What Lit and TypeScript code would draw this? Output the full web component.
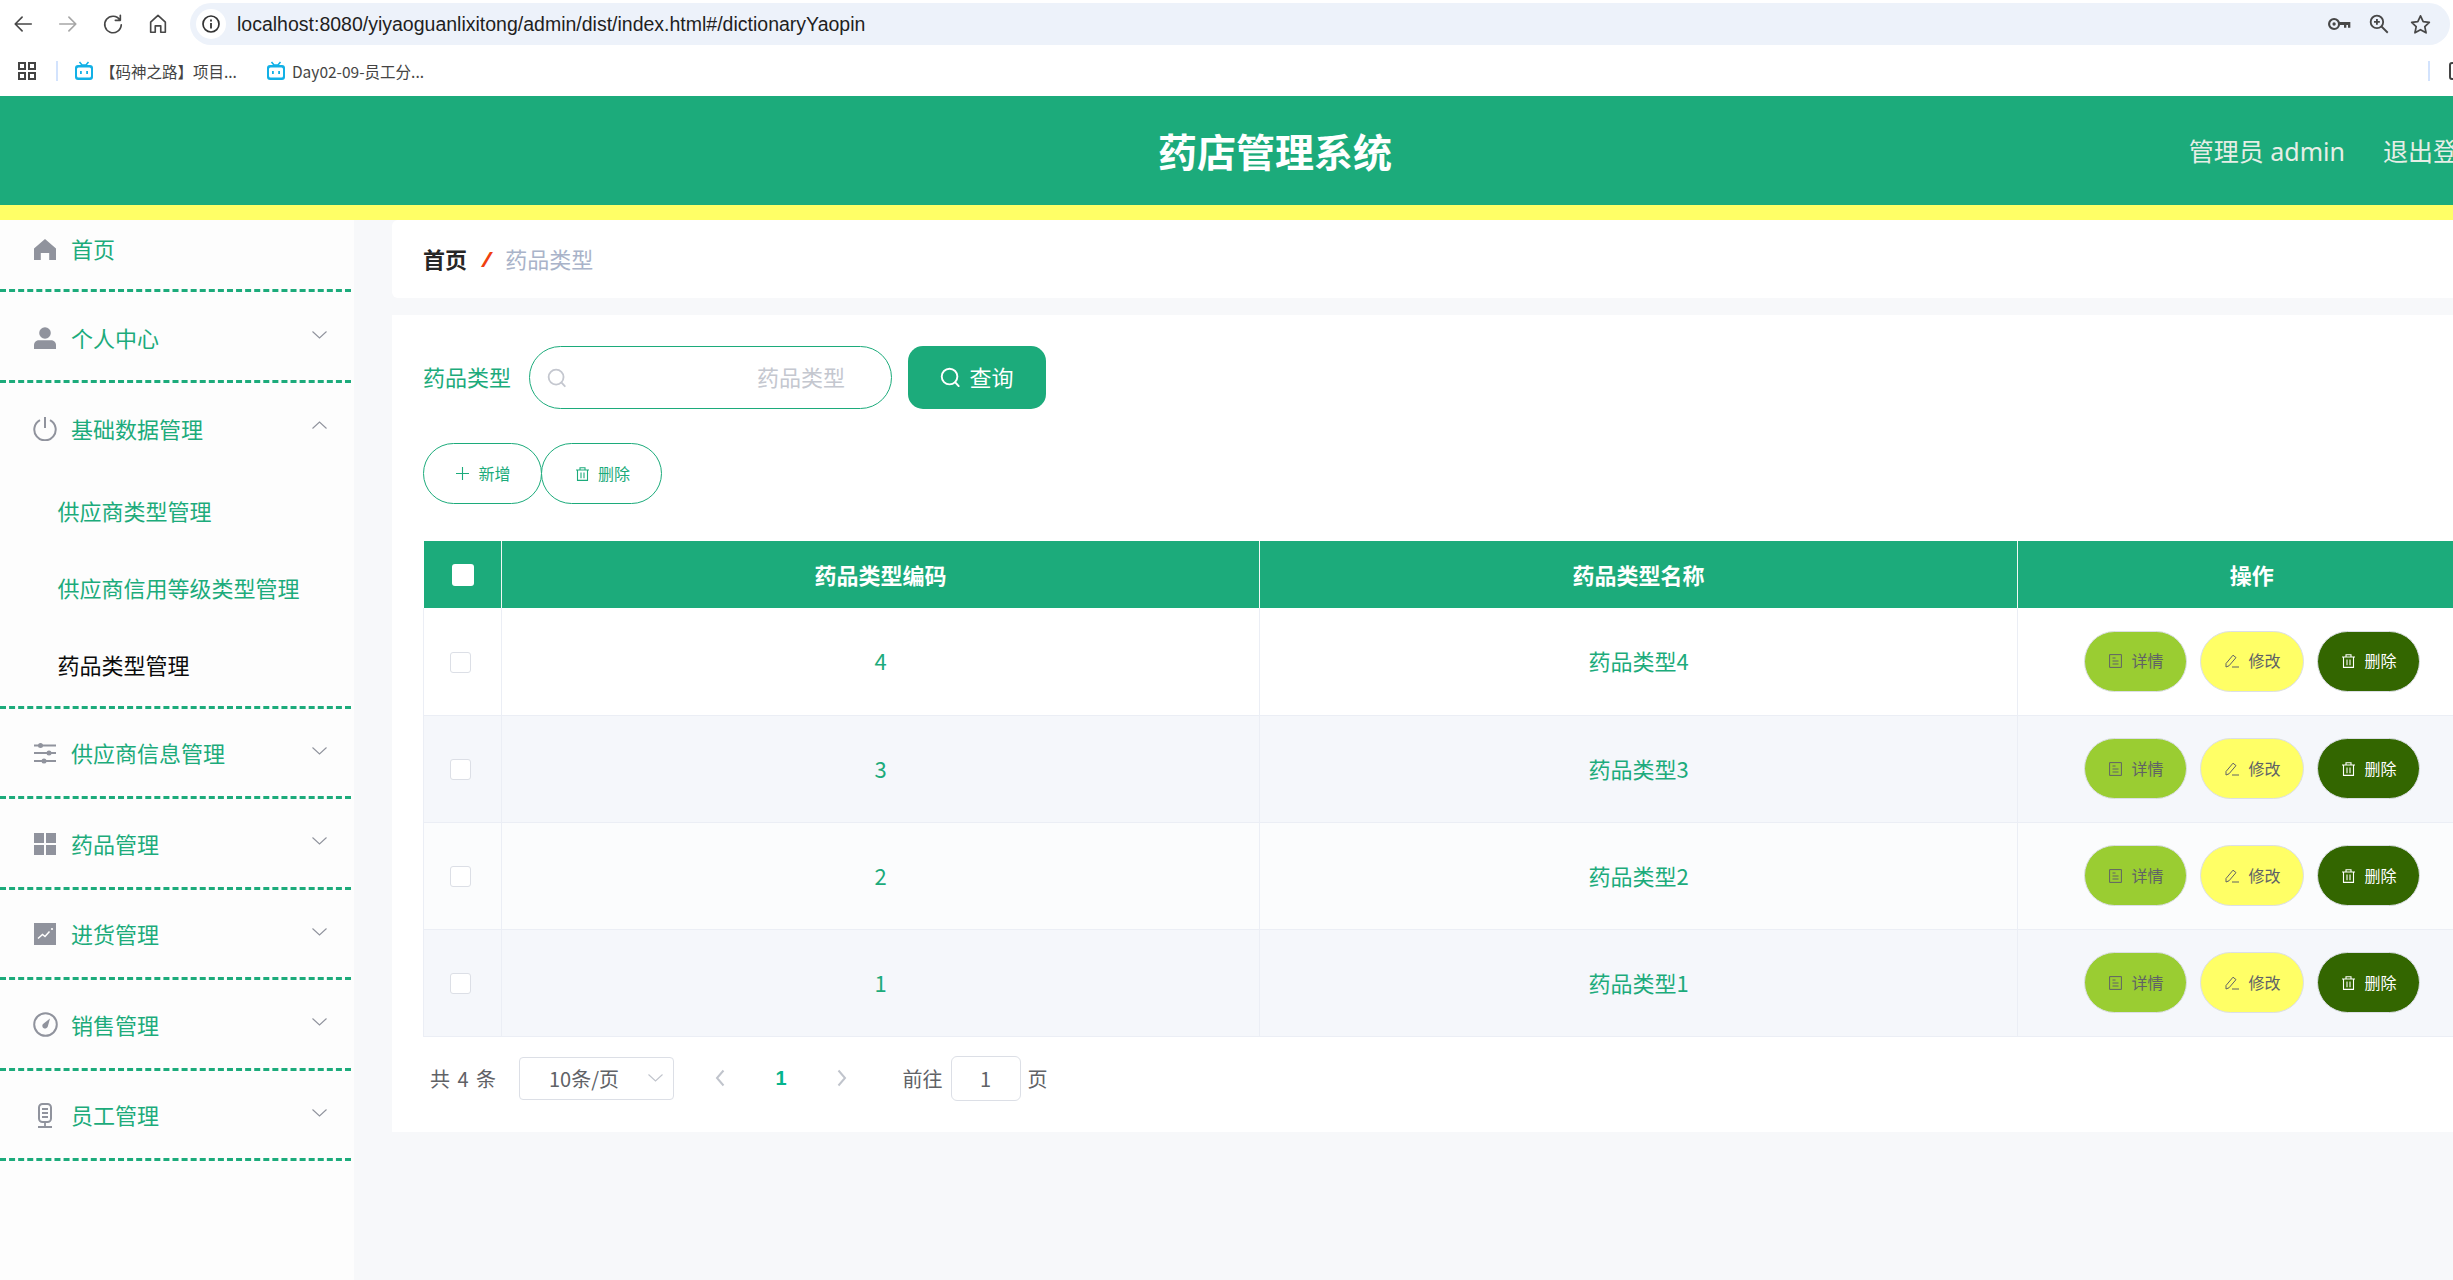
import { LitElement, html, css, svg } from "lit";
import { customElement } from "lit/decorators.js";

const ic = (w: number, h: number, body: any, vb = "0 0 24 24") =>
  html`<svg class="ic" width="${w}" height="${h}" viewBox="${vb}" xmlns="http://www.w3.org/2000/svg">${body}</svg>`;

const S = (d: string) => svg`<path d="${d}" fill="none" stroke="currentColor" stroke-width="1.8" stroke-linecap="round" stroke-linejoin="round"/>`;
const F = (d: string) => svg`<path d="${d}" fill="currentColor"/>`;

const icons = {
  back: ic(22, 22, S("M21 12H4M11 4.5 3.5 12 11 19.5")),
  forward: ic(22, 22, S("M3 12h17M13 4.5l7.5 7.5L13 19.5")),
  reload: ic(22, 22, S("M19.5 7.5A9 9 0 1 0 21 13M20 2.5v5.5h-5.5")),
  homeOut: ic(22, 22, S("M4 21V10l8-7.5L20 10v11h-5v-7H9v7Z")),
  key: ic(25, 20, svg`<circle cx="7.5" cy="12" r="6" fill="none" stroke="currentColor" stroke-width="2.6"/><circle cx="7.5" cy="12" r="2" fill="currentColor"/><path d="M13 9.5h14v7h-2.8v-3.4h-2v3.4h-2.8v-3.4H13Z" fill="currentColor"/>`, "0 0 28 24"),
  zoom: ic(20, 20, svg`<circle cx="9.5" cy="9.5" r="7.5" fill="none" stroke="currentColor" stroke-width="2.2"/><path d="M15 15l7.5 7.5M9.5 6v7M6 9.5h7" fill="none" stroke="currentColor" stroke-width="2.2"/>`),
  star: ic(23, 23, S("M12 3l2.8 6 6.4.8-4.7 4.4 1.3 6.5L12 17.4l-5.8 3.3 1.3-6.5L2.8 9.8 9.2 9Z")),
  apps: ic(20, 20, svg`<g fill="none" stroke="currentColor" stroke-width="2"><rect x="2" y="2" width="6" height="6"/><rect x="12" y="2" width="6" height="6"/><rect x="2" y="12" width="6" height="6"/><rect x="12" y="12" width="6" height="6"/></g>`, "0 0 20 20"),
  bili: ic(20, 20, svg`<path d="M5.5 1l2.5 3h4l2.5-3" fill="none" stroke="#12b0e6" stroke-width="1.6"/><rect x="1" y="4" width="18" height="15" rx="3" fill="#12b0e6"/><rect x="3" y="6.5" width="14" height="10" rx="1.5" fill="#fff"/><rect x="6" y="10" width="1.8" height="3" fill="#12b0e6"/><rect x="12.2" y="10" width="1.8" height="3" fill="#12b0e6"/>`, "0 0 20 20"),
  sqr: ic(12, 20, svg`<path d="M11 2H3a2 2 0 0 0-2 2v12a2 2 0 0 0 2 2h8" fill="none" stroke="#444" stroke-width="2"/>`, "0 0 12 20"),
  info: ic(20, 20, svg`<circle cx="10" cy="10" r="8" fill="none" stroke="#333" stroke-width="1.7"/><path d="M10 9v5.5M10 5.6v1.8" stroke="#333" stroke-width="1.8"/>`, "0 0 20 20"),

  home: ic(22, 22, F("M11 1 22 10.5V22h-6.8v-7H6.8v7H0V10.5Z"), "0 0 22 22"),
  user: ic(22, 22, svg`<circle cx="11" cy="6" r="5.8" fill="currentColor"/><path d="M0 22v-4c0-3 2.5-4.8 5-4.8h12c2.5 0 5 1.8 5 4.8v4Z" fill="currentColor"/>`, "0 0 22 22"),
  power: ic(24, 24, svg`<path d="M7 3.2a10.7 10.7 0 1 0 10 0M12 0v11" fill="none" stroke="currentColor" stroke-width="2"/>`),
  sliders: ic(22, 22, svg`<g stroke="currentColor" stroke-width="1.8"><path d="M0 3.5h22M0 11h22M0 19h22"/></g><circle cx="6.5" cy="3.5" r="2.5" fill="currentColor"/><circle cx="15" cy="11" r="2.5" fill="currentColor"/><circle cx="10" cy="19" r="2.5" fill="currentColor"/>`, "0 0 22 22"),
  grid: ic(22, 22, F("M0 0h10v10H0ZM12 0h10v10H12ZM0 12h10v10H0ZM12 12h10v10H12Z"), "0 0 22 22"),
  chart: ic(22, 22, svg`<rect width="22" height="22" fill="currentColor"/><path d="M4 15.5l4.5-4 2.5 2 4.5-5" fill="none" stroke="#fff" stroke-width="1.5"/><circle cx="18" cy="6" r="1.1" fill="#fff"/>`, "0 0 22 22"),
  compass: ic(25, 25, svg`<circle cx="12.5" cy="12.5" r="11.3" fill="none" stroke="currentColor" stroke-width="2"/><path d="M17 6.5 14.8 14.5a2.8 2.8 0 1 1-4.8-2.6Z" fill="currentColor"/>`, "0 0 25 25"),
  mic: ic(16, 25, svg`<rect x="2" y="1" width="12" height="18" rx="3.5" fill="none" stroke="currentColor" stroke-width="2"/><path d="M5 6h6M5 10h6M5 14h6M8 19v4M1 24h14" stroke="currentColor" stroke-width="1.8" fill="none"/>`, "0 0 16 25"),

  search: (size: number) => ic(size, size, svg`<circle cx="10" cy="10" r="8.2" fill="none" stroke="currentColor" stroke-width="2"/><path d="M16 16l3.6 4" fill="none" stroke="currentColor" stroke-width="2" stroke-linecap="round"/>`, "0 0 22 22"),
  plus: ic(13, 13, svg`<path d="M6.5 0v13M0 6.5h13" stroke="currentColor" stroke-width="1.1" fill="none"/>`, "0 0 13 13"),
  trash: ic(13, 14, svg`<path d="M0 3h13M4 3V.7h5V3M1.5 3v10.4h10V3M5 5.6v5.6M8 5.6v5.6" fill="none" stroke="currentColor" stroke-width="1.1"/>`, "0 0 13 14"),
  doc: ic(13, 14, svg`<path d="M.6.6h11.8v12.8H.6ZM3.5 4h3M3.5 7h6M3.5 10h6" fill="none" stroke="currentColor" stroke-width="1"/>`, "0 0 13 14"),
  edit: ic(14, 14, svg`<path d="M1 13V9.5L8 1.2l3 2.4-7 8.2ZM7 13h7" fill="none" stroke="currentColor" stroke-width="1"/>`, "0 0 14 14"),
  chevDown: ic(15, 8, svg`<path d="M.5.5 7.5 7l7-6.5" fill="none" stroke="currentColor" stroke-width="1.1"/>`, "0 0 15 8"),
  chevUp: ic(15, 8, svg`<path d="M.5 7.5 7.5 1l7 6.5" fill="none" stroke="currentColor" stroke-width="1.1"/>`, "0 0 15 8"),
  pagePrev: ic(10, 18, svg`<path d="M8.5 1.5 2 9l6.5 7.5" fill="none" stroke="currentColor" stroke-width="2"/>`, "0 0 10 18"),
  pageNext: ic(10, 18, svg`<path d="M1.5 1.5 8 9l-6.5 7.5" fill="none" stroke="currentColor" stroke-width="2"/>`, "0 0 10 18"),
};

const menus: any[] = [
  { icon: icons.user, label: "个人中心" },
  { icon: icons.power, label: "基础数据管理", open: true, subs: ["供应商类型管理", "供应商信用等级类型管理", "药品类型管理"] },
  { icon: icons.sliders, label: "供应商信息管理", low: true },
  { icon: icons.grid, label: "药品管理", low: true },
  { icon: icons.chart, label: "进货管理", low: true },
  { icon: icons.compass, label: "销售管理", low: true },
  { icon: icons.mic, label: "员工管理", low: true },
];

const rows = [
  { code: "4", name: "药品类型4" },
  { code: "3", name: "药品类型3" },
  { code: "2", name: "药品类型2" },
  { code: "1", name: "药品类型1" },
];

@customElement("app-root")
export class AppRoot extends LitElement {
  static styles = css`
    :host {
      display: block;
      width: 2453px;
      height: 1280px;
      overflow: hidden;
      background: #f7f8fa;
      font-family: "Noto Sans", "Noto Sans CJK SC", sans-serif;
      color: #1cab7b;
    }
    .ic { display: block; flex: none; }
    .page { width: 2550px; }

    .browser { height: 96px; background: #fff; color: #474747; display: flex; flex-direction: column; }
    .toolbar { height: 45px; display: flex; align-items: flex-start; padding-top: 3px; box-sizing: border-box; width: 2453px; }
    .navs { width: 190px; height: 42px; display: flex; align-items: center; padding-left: 12px; gap: 23px; box-sizing: border-box; flex: none; }
    .navs .dim { color: #a6a6a6; }
    .omni { width: 2260px; height: 42px; background: #edf2fa; border-radius: 21px; display: flex; align-items: center; box-sizing: border-box; padding: 0 18px 0 6px; }
    .infopill { width: 30px; height: 30px; border-radius: 50%; background: #fff; display: flex; align-items: center; justify-content: center; margin-right: 11px; flex: none; }
    .url { font-family: "Liberation Sans", sans-serif; font-size: 19.5px; color: #1f1f1f; flex: 1; white-space: nowrap; }
    .omni-icons { display: flex; align-items: center; gap: 20px; }
    .omni-icons .ic:first-child { margin-right: -3px; }
    .bookmarks { height: 51px; width: 2453px; display: flex; align-items: center; padding-left: 17px; box-sizing: border-box; font-size: 15.5px; color: #444; font-family: "Noto Sans CJK SC", sans-serif; }
    .bsep { width: 2px; height: 20px; background: #d3e3fd; margin: 0 16px 0 19px; flex: none; }
    .bm { display: flex; align-items: center; gap: 6px; margin-right: 29px; white-space: nowrap; }
    .bspace { flex: 1; }
    .bookmarks .bsep.end { margin: 0 19px 0 0; }
    .bookmarks .cut { margin-right: -8px; }

    .header {
      height: 124px; box-sizing: border-box; background: #1cab7b; border-bottom: 15px solid #ffff66;
      display: grid; grid-template-columns: 1fr auto 1fr; align-items: center;
    }
    .title { grid-column: 2; color: #fff; font-size: 39px; font-weight: 700; font-family: "Noto Sans CJK SC", sans-serif; padding-bottom: 2px; }
    .userbar { grid-column: 3; justify-self: end; display: flex; gap: 38px; color: #e6eee6; font-size: 25px; padding-right: 67px; padding-bottom: 1px; white-space: nowrap; }

    .body { display: flex; height: 1060px; }
    .side { width: 354px; flex: none; background: #fdfdfd; box-sizing: border-box; padding-right: 3px; font-size: 22px; font-family: "Noto Sans CJK SC", sans-serif; }
    .group { box-sizing: border-box; border-bottom: 3px dashed #1cab7b; height: 90.5px; padding-top: 16px; }
    .group.first { height: 72px; padding-top: 0; }
    .group.open { height: auto; padding-bottom: 0; }
    .group.low { padding-top: 14.5px; }
    .mtitle { height: 60px; box-sizing: border-box; padding: 0 0 2px 34px; display: flex; align-items: center; }
    .group.first .mtitle { height: 58px; }
    .mi { width: 22px; display: flex; justify-content: center; color: #90939d; margin: 2px 15px 0 0; flex: none; }
    .chev { margin-left: auto; margin-right: 24px; color: #90939d; margin-top: -5px; }
    .group.low .chev { margin-top: -3px; }
    .subs { padding: 14.5px 0 1.5px; }
    .sub { height: 77px; display: flex; align-items: center; padding: 0 0 4px 57.5px; box-sizing: border-box; }
    .sub.active { color: #0b0b0b; }

    .main { flex: 1; min-width: 0; padding-left: 38px; display: flex; flex-direction: column; align-items: stretch; gap: 17px; }
    .crumb { height: 78px; box-sizing: border-box; background: #fff; border-radius: 6px 0 0 6px; display: flex; align-items: center; padding: 0 0 2px 31px; font-size: 22px; font-family: "Noto Sans CJK SC", sans-serif; }
    .crumb b { color: #262626; font-weight: 700; }
    .crumb .sl { color: #f0400f; font-weight: 700; margin: 0 14px 0 15px; font-family: "Noto Sans", sans-serif; font-style: italic; }
    .crumb .cur { color: #a9b3c9; }

    .panel { background: #fff; height: 817px; box-sizing: border-box; padding: 31px 65px 0 31px; font-family: "Noto Sans CJK SC", sans-serif; }
    .search { display: flex; align-items: center; height: 63px; font-size: 22px; }
    .search label { width: 106px; flex: none; padding-bottom: 4px; }
    .inp { width: 363px; height: 63px; box-sizing: border-box; border: 1px solid #1cab7b; border-radius: 32px; display: flex; align-items: center; padding: 0 46px 0 17px; color: #c4c7cf; flex: none; }
    .inp input { flex: 1; min-width: 0; border: 0; outline: 0; background: none; text-align: right; font: inherit; font-size: 22px; padding: 0 0 4px; }
    .inp input::placeholder { color: #c4c7cf; opacity: 1; }
    .qbtn { margin-left: 16px; width: 138px; height: 63px; background: #1cab7b; color: #fff; border-radius: 15px; display: flex; align-items: center; justify-content: center; gap: 8px; font-size: 22px; }
    .qbtn span { padding-bottom: 4px; }

    .actions { display: flex; height: 61px; margin-top: 34px; }
    .abtn { width: 119px; height: 61px; box-sizing: border-box; border: 1px solid #1cab7b; border-radius: 30.5px; display: flex; align-items: center; justify-content: center; gap: 9px; font-size: 16px; background: #fff; padding-left: 2px; }
    .abtn span { padding-bottom: 2px; }
    .abtn + .abtn { width: 121px; margin-left: -1px; gap: 9px; padding-left: 3px; }

    table { margin-top: 37px; width: 2062px; table-layout: fixed; border-collapse: collapse; font-size: 22px; }
    th { height: 67px; padding: 0 0 2px; box-sizing: border-box; background: #1cab7b; color: #fff; font-weight: 700; border-right: 1px solid #f2f8f5; font-size: 22px; }
    th:last-child { border-right: 0; }
    td { height: 107px; padding: 0 0 2px; text-align: center; border-right: 1px solid #ebeef5; border-bottom: 1px solid #ebeef5; box-sizing: border-box; }
    td:first-child { border-left: 1px solid #ebeef5; }
    tr:nth-child(odd) td { background: #fff; }
    tr:nth-child(even) td { background: #f5f7fb; }
    tr:nth-child(3) td { background: #fbfcfd; }
    .cbh { width: 22px; height: 22px; background: #fff; border-radius: 3px; margin: 2px auto 0; position: relative; left: 1px; }
    .cb { width: 21px; height: 21px; box-sizing: border-box; background: #fff; border: 1px solid #dcdfe6; border-radius: 3px; margin: 4px auto 0; position: relative; left: -2px; }
    .ops { display: flex; justify-content: center; gap: 13px; margin-top: 2px; }
    .op { width: 103px; height: 61px; box-sizing: border-box; border-radius: 30.5px; border: 1px solid #dcdfe6; display: flex; align-items: center; justify-content: center; gap: 9px; font-size: 16px; color: #606266; padding-left: 3px; }
    .op span { padding-bottom: 2px; }
    .op.lime { background: #9acd32; }
    .op.yel { background: #ffff66; width: 104px; }
    .op.dark { background: #336600; color: #fff; }

    .pager { display: flex; align-items: center; height: 43px; margin-top: 20px; font-size: 20px; color: #606266; padding-left: 7px; }
    .total { width: 89px; flex: none; white-space: pre; word-spacing: 3px; }
    .select { width: 155px; height: 43px; box-sizing: border-box; border: 1px solid #dcdfe6; border-radius: 4px; display: flex; align-items: center; padding: 0 10px 0 29px; flex: none; }
    .select .ic { margin-left: auto; color: #c0c4cc; }
    .nav { color: #c0c4cc; margin-left: 41px; }
    .pg { color: #05b48d; font-weight: 700; width: 12px; text-align: center; margin-left: 50px; font-size: 20px; font-family: "Liberation Sans", sans-serif; }
    .nav.next { margin-left: 50px; }
    .goto { margin-left: 55.5px; }
    .pinp { width: 70px; height: 45px; box-sizing: border-box; border: 1px solid #dcdfe6; border-radius: 6px; margin: 0 7px 0 8px; display: flex; align-items: center; justify-content: center; }
  `;

  render() {
    return html`<div class="page">
      <div class="browser">
        <div class="toolbar">
          <div class="navs">
            ${icons.back}<span class="dim">${icons.forward}</span>${icons.reload}${icons.homeOut}
          </div>
          <div class="omni">
            <div class="infopill">${icons.info}</div>
            <div class="url">localhost:8080/yiyaoguanlixitong/admin/dist/index.html#/dictionaryYaopin</div>
            <div class="omni-icons">${icons.key}${icons.zoom}${icons.star}</div>
          </div>
        </div>
        <div class="bookmarks">
          ${icons.apps}
          <div class="bsep"></div>
          <div class="bm">${icons.bili}<span>【码神之路】项目...</span></div>
          <div class="bm">${icons.bili}<span>Day02-09-员工分...</span></div>
          <div class="bspace"></div>
          <div class="bsep end"></div>
          <div class="cut">${icons.sqr}</div>
        </div>
      </div>
      <div class="header">
        <div class="title">药店管理系统</div>
        <div class="userbar"><span>管理员 admin</span><span>退出登录</span></div>
      </div>
      <div class="body">
        <div class="side">
          <div class="group first">
            <div class="mtitle"><span class="mi">${icons.home}</span>首页</div>
          </div>
          ${menus.map(
            (m) => html`<div class="group ${m.open ? "open" : ""} ${m.low ? "low" : ""}">
              <div class="mtitle">
                <span class="mi">${m.icon}</span>${m.label}
                <span class="chev">${m.open ? icons.chevUp : icons.chevDown}</span>
              </div>
              ${m.subs
                ? html`<div class="subs">
                    ${m.subs.map(
                      (s: string, i: number) => html`<div class="sub ${i === 2 ? "active" : ""}">${s}</div>`
                    )}
                  </div>`
                : ""}
            </div>`
          )}
        </div>
        <div class="main">
          <div class="crumb"><b>首页</b><span class="sl">/</span><span class="cur">药品类型</span></div>
          <div class="panel">
            <div class="search">
              <label>药品类型</label>
              <div class="inp">${icons.search(20)}<input placeholder="药品类型" /></div>
              <div class="qbtn">${icons.search(21)}<span>查询</span></div>
            </div>
            <div class="actions">
              <div class="abtn">${icons.plus}<span>新增</span></div>
              <div class="abtn">${icons.trash}<span>删除</span></div>
            </div>
            <table>
              <colgroup>
                <col style="width:78px" /><col style="width:758px" /><col style="width:758px" /><col style="width:468px" />
              </colgroup>
              <thead>
                <tr>
                  <th><div class="cbh"></div></th>
                  <th>药品类型编码</th>
                  <th>药品类型名称</th>
                  <th>操作</th>
                </tr>
              </thead>
              <tbody>
                ${rows.map(
                  (r) => html`<tr>
                    <td><div class="cb"></div></td>
                    <td>${r.code}</td>
                    <td>${r.name}</td>
                    <td>
                      <div class="ops">
                        <div class="op lime">${icons.doc}<span>详情</span></div>
                        <div class="op yel">${icons.edit}<span>修改</span></div>
                        <div class="op dark">${icons.trash}<span>删除</span></div>
                      </div>
                    </td>
                  </tr>`
                )}
              </tbody>
            </table>
            <div class="pager">
              <span class="total">共 4 条</span>
              <div class="select"><span>10条/页</span>${icons.chevDown}</div>
              <span class="nav">${icons.pagePrev}</span>
              <span class="pg">1</span>
              <span class="nav next">${icons.pageNext}</span>
              <span class="goto">前往</span>
              <div class="pinp">1</div>
              <span>页</span>
            </div>
          </div>
        </div>
      </div>
    </div>`;
  }
}
